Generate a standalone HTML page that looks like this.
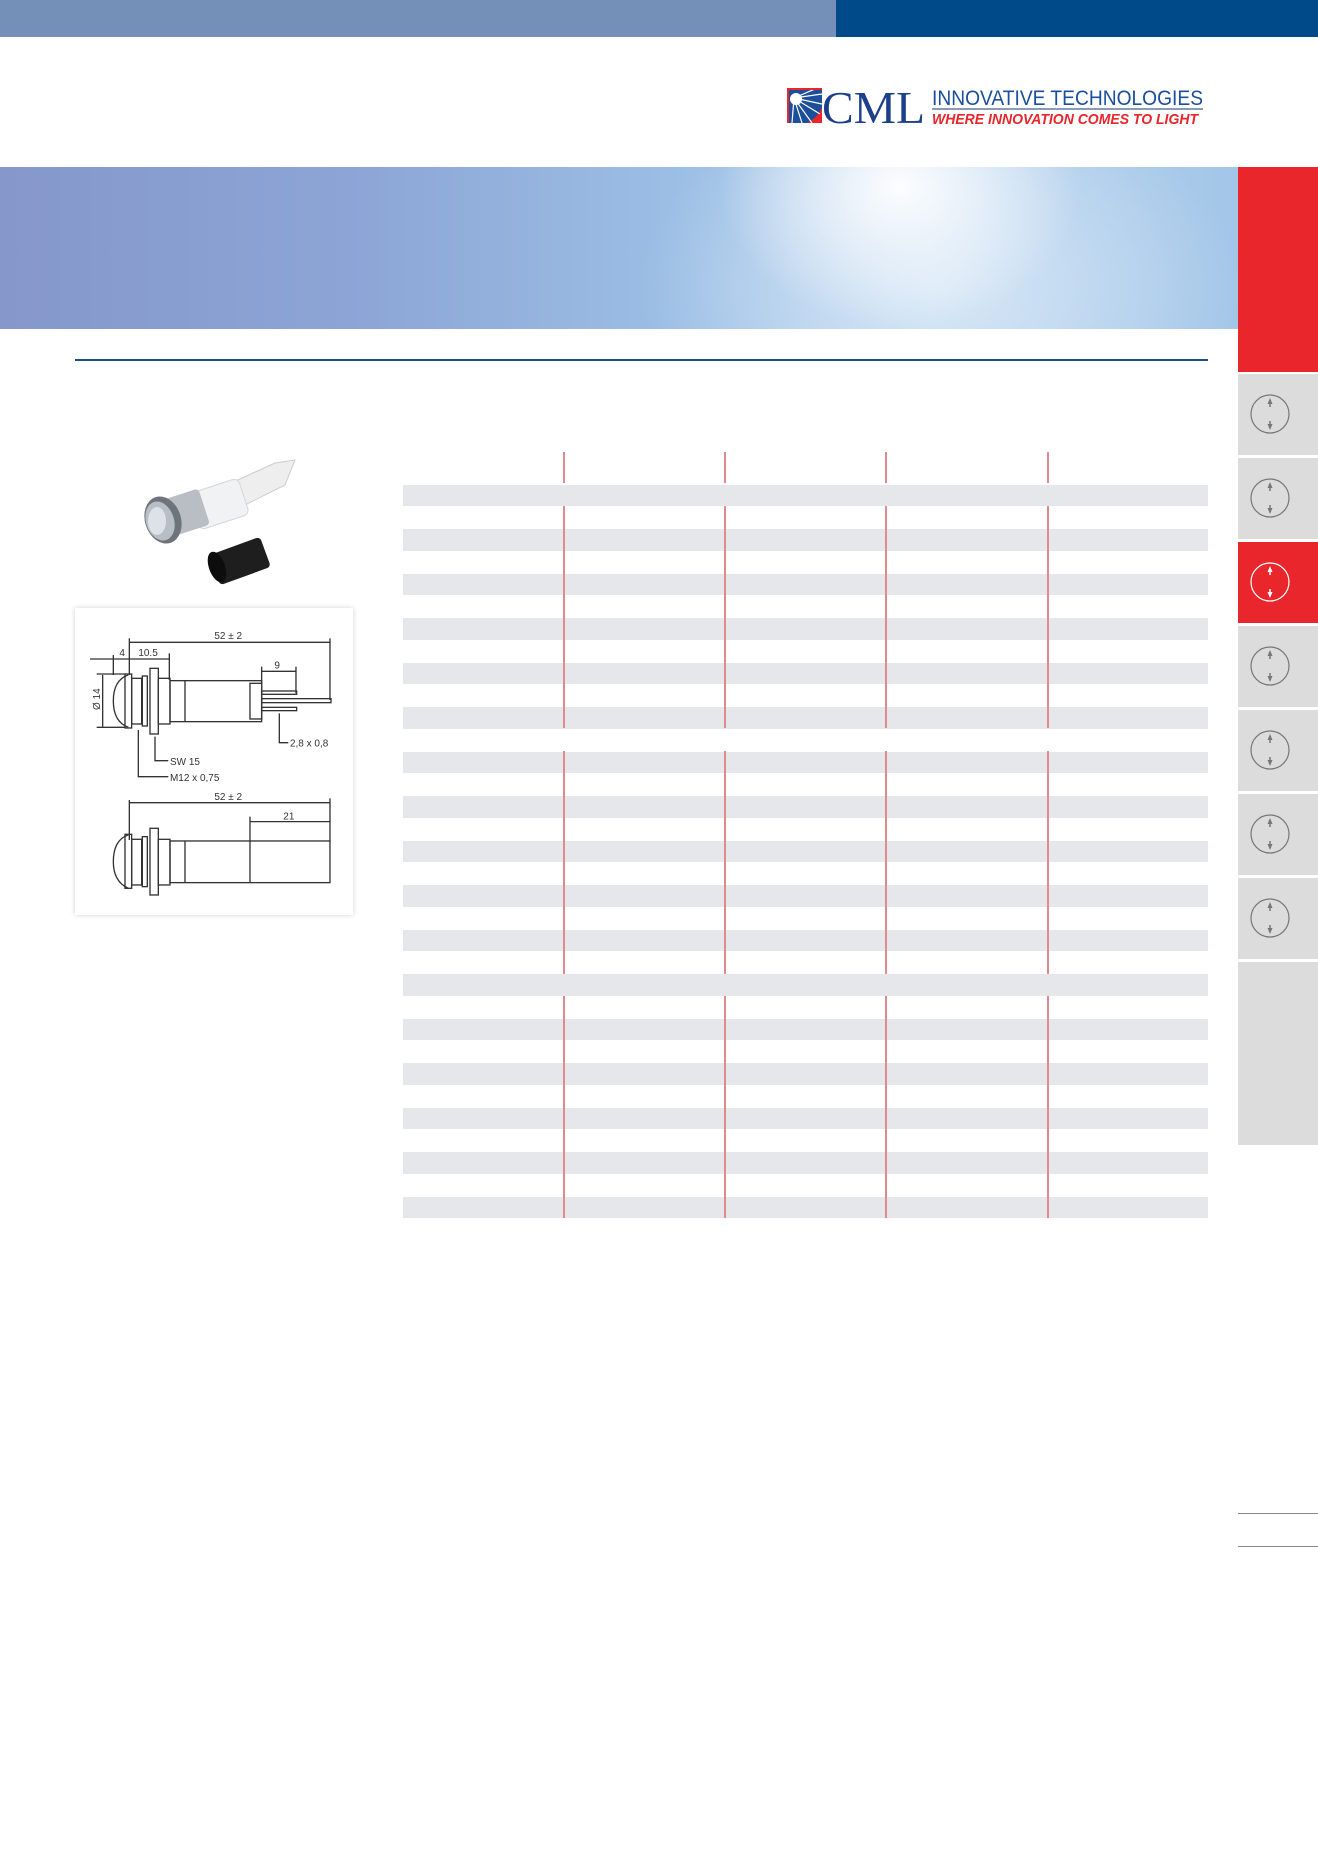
<!DOCTYPE html>
<html><head><meta charset="utf-8"><style>
*{margin:0;padding:0;box-sizing:border-box}
body{width:1318px;height:1876px;background:#fff;position:relative;overflow:hidden;font-family:"Liberation Sans",sans-serif}
.a{position:absolute}
.tab{position:absolute;left:1238px;width:80px;background:#dcdcdc}
.stripe{position:absolute;left:403px;width:805px;height:21.5px;background:#e5e7ea}
.vl{position:absolute;width:1.5px;background:#e08a90}
</style></head><body>
<div class="a" style="left:0;top:0;width:836px;height:37px;background:#7490b9"></div>
<div class="a" style="left:836px;top:0;width:482px;height:37px;background:#004a8a"></div>

<svg class="a" style="left:780px;top:80px" width="430" height="50" viewBox="0 0 430 50">
  <rect x="7" y="8" width="35" height="35" fill="#e8262b"/>
  <circle cx="14" cy="16" r="30" fill="#1b4f9b" clip-path="url(#c)"/>
  <clipPath id="c"><rect x="9" y="10" width="33" height="33"/></clipPath>
  <g stroke="#fff" stroke-width="1.2" clip-path="url(#c)">
    <line x1="14" y1="18" x2="42" y2="14"/><line x1="14" y1="18" x2="42" y2="24"/><line x1="14" y1="18" x2="40" y2="34"/><line x1="14" y1="18" x2="32" y2="43"/><line x1="14" y1="18" x2="22" y2="43"/><line x1="14" y1="18" x2="12" y2="43"/><line x1="14" y1="18" x2="42" y2="6"/>
  </g>
  <circle cx="16" cy="19" r="6" fill="#fff"/>
  <text x="42" y="43" font-family="Liberation Serif,serif" font-size="46" fill="#1b3f8b" textLength="103" lengthAdjust="spacingAndGlyphs">CML</text>
  <text x="152" y="25" font-family="Liberation Sans,sans-serif" font-size="21" fill="#1b4f9b" textLength="271" lengthAdjust="spacingAndGlyphs">INNOVATIVE TECHNOLOGIES</text>
  <rect x="152" y="28" width="271" height="2" fill="#8a9bb8"/>
  <text x="152" y="44" font-family="Liberation Sans,sans-serif" font-size="15" font-weight="bold" font-style="italic" fill="#e8262b" textLength="266" lengthAdjust="spacingAndGlyphs">WHERE INNOVATION COMES TO LIGHT</text>
</svg>

<div class="a" style="left:0;top:167px;width:1238px;height:162px;background:
radial-gradient(ellipse 180px 140px at 900px 20px,rgba(255,255,255,.95),rgba(255,255,255,0)),
radial-gradient(ellipse 300px 200px at 940px 120px,rgba(230,240,250,.7),rgba(230,240,250,0)),
linear-gradient(90deg,#8597cb 0%,#8da6d6 30%,#9cbfe5 55%,#b7d3ee 75%,#a3c6e8 100%)"></div>

<div class="a" style="left:1238px;top:167px;width:80px;height:205px;background:#e8262b"></div>
<div class="tab" style="top:374px;height:81px"></div>
<div class="tab" style="top:458px;height:81px"></div>
<div class="tab" style="top:542px;height:81px;background:#e8262b"></div>
<div class="tab" style="top:626px;height:81px"></div>
<div class="tab" style="top:710px;height:81px"></div>
<div class="tab" style="top:794px;height:81px"></div>
<div class="tab" style="top:878px;height:81px"></div>
<div class="tab" style="top:962px;height:183px"></div>
<svg class="a" style="left:1238px;top:374px" width="80" height="590">
  <defs><g id="ic"><circle cx="32" cy="40" r="19" fill="none" stroke-width="1.2"/><path d="M32 24 l-2.5 6h5z M32 56 l-2.5-6h5z" stroke="none"/><line x1="32" y1="28" x2="32" y2="33" stroke-width="1.5"/><line x1="32" y1="47" x2="32" y2="52" stroke-width="1.5"/></g></defs>
  <g stroke="#777" fill="#777"><use href="#ic"/><use href="#ic" y="84"/><use href="#ic" y="252"/><use href="#ic" y="336"/><use href="#ic" y="420"/><use href="#ic" y="504"/></g>
  <g stroke="#fff" fill="#fff"><use href="#ic" y="168"/></g>
</svg>
<div class="a" style="left:1238px;top:1513px;width:80px;height:1px;background:#888"></div>
<div class="a" style="left:1238px;top:1546px;width:80px;height:1px;background:#888"></div>

<div class="a" style="left:75px;top:359px;width:1133px;height:2px;background:#1b4f8b"></div>

<!-- product photo -->
<svg class="a" style="left:125px;top:455px" width="180" height="130">
  <polygon points="95,33 150,8 170,5 160,30 110,55" fill="#eee" stroke="#ccc"/>
  <rect x="68" y="30" width="52" height="38" rx="6" fill="#f1f2f3" stroke="#d6d6d6" transform="rotate(-18 94 49)"/>
  <rect x="45" y="38" width="35" height="38" rx="4" fill="#b9bdc4" transform="rotate(-18 62 57)"/>
  <ellipse cx="38" cy="65" rx="18" ry="24" fill="#6e747c" transform="rotate(-18 38 65)"/>
  <ellipse cx="35" cy="66" rx="14" ry="20" fill="#b8bec6" transform="rotate(-18 35 66)"/>
  <ellipse cx="32" cy="66" rx="9" ry="14" fill="#dde2e8"/>
  <rect x="88" y="90" width="54" height="32" rx="4" fill="#1e1e1e" transform="rotate(-20 115 106)"/>
  <ellipse cx="92" cy="112" rx="8" ry="16" fill="#0d0d0d" transform="rotate(-20 92 112)"/>
</svg>

<!-- drawing -->
<div class="a" style="left:75px;top:608px;width:278px;height:307px;background:#fff;box-shadow:0 0 5px rgba(0,0,0,.18)"></div>
<svg class="a" style="left:75px;top:608px" width="278" height="307">
<g transform="translate(-5,-8) scale(0.3333)" stroke="#333" stroke-width="4" fill="none" font-family="Liberation Sans,sans-serif">
  <line x1="178" y1="115" x2="178" y2="225"/><line x1="780" y1="115" x2="780" y2="300"/><line x1="178" y1="127" x2="780" y2="127"/>
  <line x1="60" y1="177" x2="300" y2="177"/><line x1="130" y1="165" x2="130" y2="225"/><line x1="298" y1="160" x2="298" y2="240"/>
  <line x1="575" y1="200" x2="575" y2="250"/><line x1="678" y1="200" x2="678" y2="280"/><line x1="575" y1="214" x2="678" y2="214"/>
  <line x1="80" y1="222" x2="165" y2="222"/><line x1="80" y1="382" x2="165" y2="382"/><line x1="98" y1="225" x2="98" y2="380"/>
  <path d="M175 225 Q130 240 130 303 Q130 365 175 382"/>
  <rect x="165" y="222" width="20" height="162"/><rect x="185" y="235" width="30" height="137"/>
  <rect x="217" y="228" width="15" height="150"/><rect x="240" y="205" width="25" height="197"/>
  <rect x="265" y="235" width="35" height="137"/><rect x="300" y="242" width="275" height="123"/>
  <line x1="345" y1="242" x2="345" y2="365"/><rect x="540" y="250" width="35" height="107"/>
  <rect x="575" y="273" width="105" height="10"/><rect x="575" y="296" width="208" height="12"/><rect x="575" y="322" width="105" height="10"/>
  <path d="M205 390 V530 H295"/><path d="M255 410 V482 H295"/><path d="M628 340 V428 H655"/>
  <line x1="178" y1="600" x2="178" y2="720"/><line x1="780" y1="595" x2="780" y2="725"/><line x1="178" y1="608" x2="780" y2="608"/>
  <line x1="540" y1="650" x2="540" y2="725"/><line x1="540" y1="665" x2="780" y2="665"/>
  <path d="M175 705 Q130 720 130 785 Q130 845 175 865"/>
  <rect x="165" y="703" width="20" height="162"/><rect x="185" y="718" width="30" height="137"/>
  <rect x="217" y="710" width="15" height="150"/><rect x="240" y="685" width="25" height="200"/>
  <rect x="265" y="718" width="35" height="137"/><rect x="300" y="723" width="480" height="125"/>
  <line x1="345" y1="723" x2="345" y2="848"/><line x1="540" y1="723" x2="540" y2="848"/>
  <g fill="#333" stroke="none" font-size="30">
    <text x="433" y="117">52 ± 2</text><text x="148" y="168">4</text><text x="205" y="168">10.5</text>
    <text x="613" y="205">9</text><text x="660" y="440">2,8 x 0,8</text><text x="300" y="495">SW 15</text>
    <text x="300" y="543">M12 x 0,75</text><text x="433" y="600">52 ± 2</text><text x="640" y="658">21</text>
    <text transform="translate(90 330) rotate(-90)">Ø 14</text>
  </g>
</g>
</svg>

<!-- table -->
<div class="stripe" style="top:484.5px"></div><div class="stripe" style="top:529px"></div><div class="stripe" style="top:573.5px"></div><div class="stripe" style="top:618px"></div><div class="stripe" style="top:662.5px"></div><div class="stripe" style="top:707px"></div><div class="stripe" style="top:751.5px"></div><div class="stripe" style="top:796px"></div><div class="stripe" style="top:840.5px"></div><div class="stripe" style="top:885px"></div><div class="stripe" style="top:929.5px"></div><div class="stripe" style="top:974px"></div><div class="stripe" style="top:1018.5px"></div><div class="stripe" style="top:1063px"></div><div class="stripe" style="top:1107.5px"></div><div class="stripe" style="top:1152px"></div><div class="stripe" style="top:1196.5px"></div>

<div class="vl" style="left:563px;top:452px;height:31px"></div><div class="vl" style="left:724px;top:452px;height:31px"></div><div class="vl" style="left:885px;top:452px;height:31px"></div><div class="vl" style="left:1047px;top:452px;height:31px"></div>
<div class="vl" style="left:563px;top:506px;height:222px"></div><div class="vl" style="left:724px;top:506px;height:222px"></div><div class="vl" style="left:885px;top:506px;height:222px"></div><div class="vl" style="left:1047px;top:506px;height:222px"></div>
<div class="vl" style="left:563px;top:751px;height:223px"></div><div class="vl" style="left:724px;top:751px;height:223px"></div><div class="vl" style="left:885px;top:751px;height:223px"></div><div class="vl" style="left:1047px;top:751px;height:223px"></div>
<div class="vl" style="left:563px;top:996px;height:222px"></div><div class="vl" style="left:724px;top:996px;height:222px"></div><div class="vl" style="left:885px;top:996px;height:222px"></div><div class="vl" style="left:1047px;top:996px;height:222px"></div>
</body></html>
